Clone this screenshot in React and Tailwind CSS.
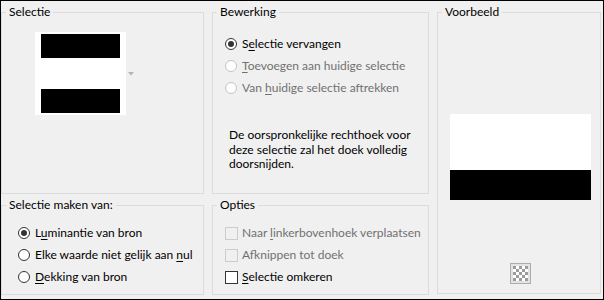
import React from 'react';

const font = { fontFamily: 'Lato, "Noto Sans", sans-serif' };

const GroupBox = ({ title, className, children }) => (
  <fieldset className={`border border-[#dcdcdc] ${className}`}>
    <legend className="ml-[4px] px-[3px] text-[12px] leading-[16px] text-black whitespace-nowrap">{title}</legend>
    {children}
  </fieldset>
);

const Key = ({ children }) => (
  <span className="underline decoration-1 underline-offset-[2px]">{children}</span>
);

const Radio = ({ checked, disabled, children }) => (
  <div className="flex items-center h-[22px]">
    <span
      className={`w-[12px] h-[12px] shrink-0 rounded-full border flex items-center justify-center bg-white ${
        disabled ? 'border-[#c4c4c4]' : 'border-[#333333]'
      }`}
    >
      {checked && <span className="w-[6px] h-[6px] rounded-full bg-[#333333]" />}
    </span>
    <span
      className={`ml-[5px] text-[12px] leading-[16px] whitespace-nowrap ${
        disabled ? 'text-[#707070]' : 'text-black'
      }`}
    >
      {children}
    </span>
  </div>
);

const Checkbox = ({ disabled, children }) => (
  <div className="flex items-center h-[22px]">
    <span
      className={`w-[13px] h-[13px] shrink-0 border ${
        disabled ? 'border-[#cccccc] bg-[#f0f0f0]' : 'border-[#333333] bg-white'
      }`}
    />
    <span
      className={`ml-[4px] text-[12px] leading-[16px] whitespace-nowrap ${
        disabled ? 'text-[#707070]' : 'text-black'
      }`}
    >
      {children}
    </span>
  </div>
);

const Checker = () => (
  <svg width="21" height="21" viewBox="0 0 21 21">
    <rect x="0.5" y="0.5" width="20" height="20" fill="#e3e3e3" stroke="#adadad" />
    <rect x="3" y="3" width="15" height="15" fill="#ffffff" />
    {[0, 1, 2, 3, 4].map(r =>
      [0, 1, 2, 3, 4].map(c =>
        (r + c) % 2 === 0 ? (
          <rect key={`${r}-${c}`} x={3 + c * 3} y={3 + r * 3} width="3" height="3" fill="#9c9c9c" />
        ) : null
      )
    )}
  </svg>
);

const App = () => {
  return (
    <div style={font} className="w-[604px] h-[300px] border border-black bg-[#f0f0f0] pt-[3px] pr-[2px] pb-[4px]">
      <div className="flex gap-[8px] h-full">
        {/* left column */}
        <div className="w-[203px] flex flex-col gap-[3px]">
          <GroupBox title="Selectie" className="h-[190px]">
            <div className="flex items-center mt-[12px] ml-[33px]">
              <div className="w-[91px] h-[83px] bg-white px-[6px] py-[2px] flex flex-col justify-between">
                <div className="h-[24px] bg-black" />
                <div className="h-[24px] bg-black" />
              </div>
              <svg width="6" height="4" viewBox="0 0 6 4" className="ml-[2px]">
                <polygon points="0,0 6,0 3,3.5" fill="#b4b4b4" />
              </svg>
            </div>
          </GroupBox>
          <GroupBox title="Selectie maken van:" className="h-[98px]">
            <div className="pl-[16px] pt-[9px]">
              <Radio checked>
                L<Key>u</Key>minantie van bron
              </Radio>
              <Radio>
                Elke waarde niet gelijk aan <Key>n</Key>ul
              </Radio>
              <Radio>
                <Key>D</Key>ekking van bron
              </Radio>
            </div>
          </GroupBox>
        </div>

        {/* middle column */}
        <div className="w-[217px] flex flex-col gap-[3px]">
          <GroupBox title="Bewerking" className="h-[190px]">
            <div className="pl-[12px] pt-[13px]">
              <Radio checked>
                S<Key>e</Key>lectie vervangen
              </Radio>
              <Radio disabled>
                <Key>T</Key>oevoegen aan huidige selectie
              </Radio>
              <Radio disabled>
                Van <Key>h</Key>uidige selectie aftrekken
              </Radio>
            </div>
            <p className="mt-[29px] pl-[16px] text-[12px] leading-[14.5px] text-black whitespace-nowrap">
              De oorspronkelijke rechthoek voor
              <br />
              deze selectie zal het doek volledig
              <br />
              doorsnijden.
            </p>
          </GroupBox>
          <GroupBox title="Opties" className="h-[98px]">
            <div className="pl-[12px] pt-[9px]">
              <Checkbox disabled>
                Naar <Key>l</Key>inkerbovenhoek verplaatsen
              </Checkbox>
              <Checkbox disabled>
                Af<Key>k</Key>nippen tot doek
              </Checkbox>
              <Checkbox>
                <Key>S</Key>electie omkeren
              </Checkbox>
            </div>
          </GroupBox>
        </div>

        {/* right column */}
        <GroupBox title="Voorbeeld" className="w-[164px] h-[290px]">
          <div className="ml-[12px] mt-[94px] w-[141px] h-[86px] flex flex-col">
            <div className="h-[56px] bg-white" />
            <div className="h-[30px] bg-black" />
          </div>
          <div className="ml-[72px] mt-[63px] w-[21px] h-[21px]">
            <Checker />
          </div>
        </GroupBox>
      </div>
    </div>
  );
};

export default App;
